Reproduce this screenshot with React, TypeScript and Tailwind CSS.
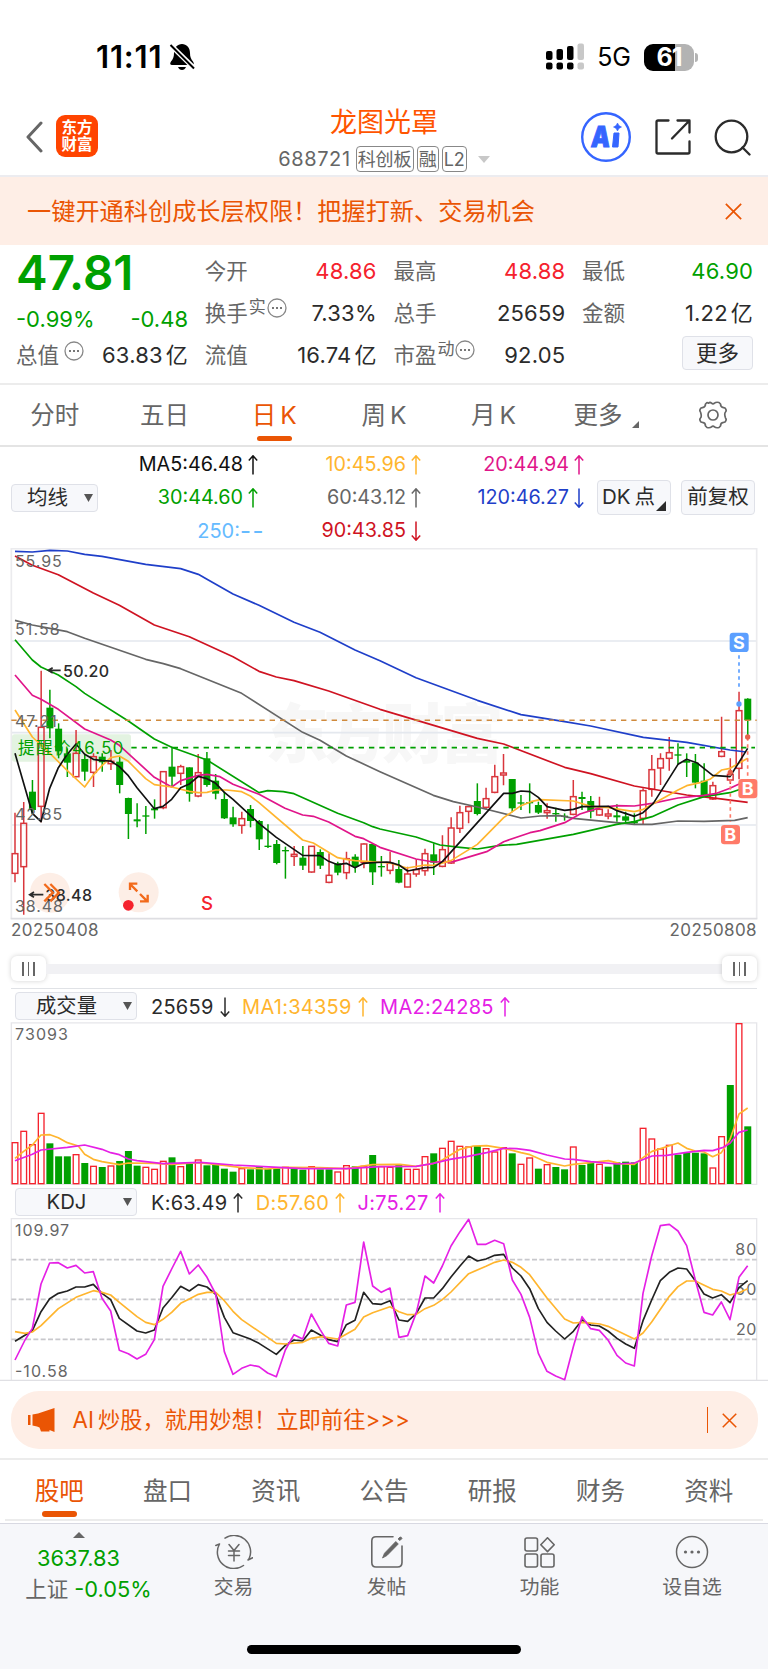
import type { ReactNode } from 'react'

type Candle = [string, number, number, number, number]
type Bar = [string, number]

// chart units are a third of a pixel, candles are spaced by STEP
const FIRST = 45
const STEP = 26.17
const RED = '#d9363c'
const GREEN = '#00a000'

const xAt = (i: number) => FIRST + i * STEP

// [colour, high, top, bottom, low]
const CANDLES: Candle[] = [
  ['r', 818, 941, 1000, 1027], ['r', 786, 850, 980, 1124], ['g', 720, 755, 810, 822],
  ['r', 392, 562, 799, 847], ['g', 449, 503, 565, 595], ['g', 550, 566, 634, 655],
  ['g', 625, 640, 668, 711], ['r', 570, 640, 710, 712], ['g', 645, 657, 695, 722],
  ['r', 640, 650, 697, 741], ['g', 640, 650, 667, 695], ['r', 630, 664, 671, 690],
  ['g', 650, 665, 735, 760], ['g', 773, 774, 822, 897], ['g', 790, 838, 844, 862],
  ['g', 798, 826, 830, 882], ['g', 778, 805, 811, 836], ['r', 693, 695, 803, 808],
  ['g', 620, 680, 710, 740], ['r', 674, 680, 700, 735], ['g', 682, 682, 761, 785],
  ['r', 642, 698, 768, 772], ['g', 636, 655, 735, 740], ['g', 702, 722, 761, 778],
  ['g', 755, 777, 835, 837], ['g', 800, 832, 853, 860], ['r', 815, 836, 856, 881],
  ['g', 795, 807, 843, 862], ['g', 840, 843, 898, 930], ['g', 853, 917, 921, 924],
  ['g', 900, 912, 969, 973], ['g', 920, 930, 934, 1016], ['r', 918, 943, 949, 978],
  ['g', 918, 953, 977, 990], ['r', 918, 919, 996, 998], ['g', 928, 936, 977, 987],
  ['r', 940, 1006, 1027, 1030], ['g', 965, 970, 998, 1006], ['r', 935, 956, 998, 1018],
  ['g', 943, 950, 980, 998], ['r', 910, 912, 967, 985], ['g', 911, 912, 997, 1035],
  ['g', 948, 978, 982, 1010], ['r', 935, 970, 991, 1003], ['g', 960, 987, 1028, 1030],
  ['r', 980, 1002, 1041, 1042], ['r', 958, 989, 1002, 1010], ['r', 926, 941, 992, 1007],
  ['g', 910, 943, 968, 1005], ['r', 886, 929, 979, 982], ['r', 832, 864, 969, 972],
  ['r', 797, 818, 865, 879], ['r', 797, 800, 814, 850], ['g', 730, 783, 822, 826],
  ['r', 743, 776, 802, 808], ['r', 674, 710, 757, 760], ['r', 642, 699, 705, 736],
  ['g', 717, 717, 805, 817], ['g', 765, 787, 791, 810], ['g', 730, 786, 790, 820],
  ['g', 785, 795, 818, 822], ['r', 790, 812, 818, 836], ['g', 803, 819, 823, 845],
  ['g', 820, 827, 831, 842], ['r', 720, 770, 823, 826], ['g', 755, 771, 777, 810],
  ['g', 768, 783, 815, 835], ['r', 770, 808, 825, 827], ['r', 808, 822, 828, 838],
  ['g', 793, 826, 832, 845], ['g', 815, 829, 842, 848], ['g', 820, 844, 850, 853],
  ['r', 745, 752, 835, 852], ['r', 645, 689, 748, 770], ['r', 640, 656, 684, 735],
  ['r', 591, 638, 655, 692], ['g', 610, 643, 647, 675], ['g', 640, 662, 668, 711],
  ['g', 642, 668, 728, 745], ['g', 670, 722, 768, 770], ['r', 725, 737, 777, 780],
  ['r', 530, 635, 649, 652], ['r', 655, 703, 720, 732], ['r', 455, 512, 685, 718],
  ['g', 475, 476, 541, 597],
]

const MA_LINES = [
  { color: '#1f3fc9', points: '45,34 97,36 150,31 202,33 254,43 306,49 437,73 542,86 595,103 621,118 699,162 777,196 882,247 960,277 1065,330 1140,362 1248,413 1432,481 1563,524 1694,545 1772,558 1930,592 2060,607 2190,630 2238,636' },
  { color: '#cf1322', points: '45,48 97,76 175,104 280,159 358,196 463,255 568,290 699,350 777,394 829,411 882,422 986,453 1140,508 1432,595 1511,612 1694,682 1772,701 1903,738 2060,765 2150,775 2243,787' },
  { color: '#666666', points: '45,241 97,255 150,265 202,275 254,295 437,358 490,371 542,386 725,460 908,577 960,601 1039,648 1140,695 1300,766 1360,785 1432,801 1563,834 1620,828 1680,827 1720,835 1903,853 1956,853 2034,843 2112,844 2204,841 2243,833' },
  { color: '#00a000', points: '45,299 97,360 123,381 175,405 228,440 254,460 385,543 463,597 515,622 621,660 777,758 803,752 850,755 882,761 1013,820 1091,848 1118,860 1140,867 1248,891 1320,915 1380,922 1432,927 1500,916 1550,913 1720,883 1850,853 1903,845 1956,830 2034,795 2112,770 2190,758 2243,740' },
  { color: '#e0158a', points: '45,405 97,466 123,478 175,508 254,567 332,600 358,616 463,712 515,741 542,722 595,706 621,703 660,710 699,733 777,763 855,805 908,825 940,829 986,846 1065,889 1091,896 1140,922 1248,957 1300,966 1360,965 1460,935 1511,905 1590,878 1620,872 1694,848 1740,822 1800,803 1850,797 1903,798 1956,790 2034,774 2112,766 2150,760 2190,745 2243,720' },
  { color: '#ffb52e', points: '45,510 97,591 150,640 202,692 254,741 280,705 306,677 332,653 358,648 385,664 411,690 437,716 463,734 515,741 568,754 595,758 621,757 647,750 680,750 725,755 751,768 777,788 908,900 940,909 1013,953 1039,958 1065,962 1110,965 1170,969 1221,984 1275,975 1301,976 1353,962 1432,913 1511,833 1563,797 1593,785 1620,779 1720,783 1772,799 1825,803 1903,815 1930,808 2034,750 2060,737 2100,728 2130,718 2165,690 2190,685 2243,655' },
  { color: '#111111', points: '45,640 97,820 123,845 149,745 175,683 202,643 228,612 254,643 280,658 306,662 332,663 358,680 385,707 411,743 463,806 489,799 515,778 542,743 568,732 595,709 621,716 647,730 673,757 699,778 777,850 829,892 908,946 960,947 986,964 1013,974 1039,970 1065,983 1091,970 1118,968 1160,966 1170,967 1197,975 1223,993 1275,983 1301,982 1327,965 1511,760 1537,760 1563,753 1590,755 1615,772 1641,800 1694,811 1720,808 1746,800 1825,799 1851,812 1903,829 1929,818 1960,790 2034,673 2060,658 2090,668 2138,706 2190,710 2243,625' },
]

const VOLUMES: Bar[] = [
  ['r', 637], ['r', 603], ['r', 643], ['r', 549], ['g', 640], ['g', 679], ['g', 679], ['r', 673],
  ['g', 699], ['r', 708], ['g', 711], ['r', 707], ['g', 693], ['g', 663], ['g', 707], ['r', 711],
  ['r', 717], ['r', 693], ['g', 682], ['r', 709], ['g', 702], ['r', 689], ['g', 706], ['g', 704],
  ['g', 716], ['g', 725], ['r', 715], ['g', 718], ['g', 709], ['g', 716], ['g', 715], ['r', 711],
  ['g', 711], ['g', 719], ['r', 709], ['g', 718], ['g', 718], ['r', 725], ['r', 706], ['g', 709],
  ['r', 708], ['g', 675], ['r', 709], ['r', 711], ['g', 704], ['r', 717], ['r', 717], ['r', 679],
  ['g', 670], ['r', 654], ['r', 633], ['r', 648], ['r', 650], ['g', 648], ['r', 655], ['r', 665],
  ['r', 652], ['g', 670], ['r', 702], ['r', 683], ['g', 716], ['r', 703], ['g', 711], ['g', 718],
  ['r', 650], ['g', 705], ['g', 698], ['r', 702], ['g', 710], ['g', 697], ['g', 695], ['g', 697],
  ['r', 594], ['r', 626], ['r', 656], ['r', 645], ['g', 674], ['g', 667], ['g', 668], ['g', 670],
  ['r', 713], ['r', 619], ['g', 465], ['r', 280], ['g', 589],
]

const VOLUME_LINES = [
  { color: '#ffb52e', points: '45,685 71,664 97,645 123,615 150,614 175,623 202,638 235,648 254,673 280,688 306,695 358,704 385,699 463,700 515,703 595,698 673,706 725,713 800,717 856,712 960,713 1039,716 1118,704 1200,703 1248,709 1301,700 1327,690 1380,658 1420,648 1460,647 1511,655 1540,662 1563,668 1590,674 1641,697 1694,708 1720,703 1772,698 1825,692 1860,701 1903,703 1930,682 1956,664 2034,639 2060,655 2086,663 2112,666 2138,680 2164,668 2190,628 2217,552 2243,534' },
  { color: '#e520e5', points: '45,692 97,673 123,660 202,652 254,645 306,658 332,668 358,674 385,687 411,692 489,701 600,697 700,705 777,709 908,716 1039,716 1140,710 1248,709 1300,700 1350,688 1400,680 1460,668 1511,655 1550,656 1590,661 1641,675 1694,687 1720,688 1772,695 1851,702 1903,699 1956,678 2000,676 2060,667 2112,661 2138,662 2170,652 2190,640 2217,607 2243,600' },
]

const KDJ_LINES = [
  { color: '#222222', points: '45,1234 97,1202 123,1145 149,1106 175,1090 202,1083 228,1071 254,1071 280,1063 306,1090 332,1109 358,1165 411,1203 437,1209 463,1200 489,1134 515,1103 542,1069 568,1083 595,1064 621,1071 647,1093 673,1162 699,1208 751,1227 777,1240 829,1273 856,1246 882,1230 908,1233 934,1200 986,1229 1013,1235 1039,1184 1065,1171 1091,1087 1118,1121 1144,1123 1170,1112 1197,1170 1223,1174 1249,1150 1275,1104 1301,1104 1327,1076 1353,1041 1380,1008 1406,978 1432,993 1458,987 1484,976 1511,973 1537,1014 1563,1038 1589,1076 1615,1136 1641,1177 1667,1203 1694,1227 1720,1204 1746,1170 1772,1185 1798,1188 1824,1203 1851,1225 1877,1242 1903,1255 1929,1172 1955,1110 1981,1052 2008,1027 2034,1014 2060,1017 2086,1052 2112,1092 2138,1104 2164,1094 2190,1118 2217,1073 2243,1052' },
  { color: '#ffb52e', points: '45,1205 75,1210 97,1206 123,1187 175,1136 228,1102 280,1082 306,1087 332,1095 358,1117 411,1160 437,1177 463,1184 489,1168 515,1147 542,1120 568,1107 595,1093 621,1087 647,1087 673,1112 699,1144 725,1169 803,1222 829,1240 856,1242 908,1237 934,1225 965,1220 1013,1227 1065,1198 1091,1161 1118,1148 1170,1130 1197,1145 1223,1154 1249,1153 1275,1136 1301,1126 1327,1109 1353,1086 1406,1031 1458,1009 1484,997 1511,990 1537,997 1563,1012 1589,1034 1641,1104 1694,1167 1720,1179 1750,1177 1800,1182 1824,1189 1903,1227 1929,1209 1955,1176 2008,1099 2034,1070 2060,1053 2086,1053 2138,1078 2164,1083 2190,1095 2217,1088 2243,1076' },
  { color: '#e520e5', points: '45,1290 75,1230 97,1195 123,1062 149,999 175,998 202,1014 228,1006 254,1029 280,1025 306,1105 332,1143 358,1261 385,1271 411,1287 437,1273 463,1229 489,1069 515,1017 542,964 568,1032 595,1005 621,1042 647,1092 673,1265 699,1333 725,1315 751,1305 777,1310 803,1329 829,1340 856,1260 882,1214 908,1227 934,1152 960,1198 986,1240 1013,1248 1039,1125 1065,1117 1091,936 1118,1068 1144,1087 1170,1074 1197,1222 1223,1217 1249,1148 1275,1038 1301,1059 1327,1008 1353,948 1380,905 1406,868 1432,943 1458,943 1484,931 1511,941 1537,1050 1563,1093 1589,1162 1615,1270 1641,1324 1667,1338 1694,1349 1720,1250 1746,1160 1772,1196 1798,1201 1824,1230 1851,1276 1877,1299 1903,1308 1929,1090 1955,978 1981,887 2008,883 2034,903 2060,947 2086,1050 2112,1147 2138,1155 2164,1116 2190,1169 2217,1042 2243,1007' },
]

interface LineProps {
  color: string
  points: string
}

function Line({ color, points }: LineProps) {
  return <polyline points={points} fill="none" stroke={color} strokeWidth={5} strokeLinejoin="round" />
}

interface LabelProps {
  x: number
  y: number
  width: number
  size?: number
  color?: string
  weight?: number
  children: string
}

function Label({ x, y, width, size = 48, color = '#666', weight = 400, children }: LabelProps) {
  return (
    <text x={x} y={y} fontSize={size} fill={color} fontWeight={weight} textLength={width}>
      {children}
    </text>
  )
}

function StatusBar() {
  return (
    <div className="flex h-[90px] items-start justify-between pt-[40px] pr-[70px] pl-[96px]">
      <div className="flex h-[34px] items-center gap-[7px]">
        <span className="text-[31px] leading-[34px] font-semibold tracking-[0.8px] text-black">11:11</span>
        <svg width="26" height="28" viewBox="0 0 26 28">
          <path d="M13 1C8.500 1 5 4.500 5 10c0 4-1 6-3 8.500-1.500 2-.8 3.500 1 3.500h20c1.800 0 2.500-1.500 1-3.500C22 16 21 14 21 10c0-5.500-3.500-9-8-9zM9 24h8c-.8 2-2.200 3-4 3s-3.200-1-4-3z" fill="#000" />
          <path d="M2 2.500 25 25" stroke="#fff" strokeWidth="5" />
          <path d="M1.500 2 25 25.500" stroke="#000" strokeWidth="2" />
        </svg>
      </div>
      <div className="flex h-[34px] items-center">
        <svg width="39" height="28" viewBox="0 0 39 28">
          <g fill="#000">
            <rect x="0" y="8" width="6.500" height="9" rx="2" />
            <rect x="10.500" y="6" width="6.500" height="11" rx="2" />
            <rect x="21" y="3" width="6.500" height="14" rx="2" />
            <rect x="0" y="19.500" width="6.500" height="7" rx="2" />
            <rect x="10.500" y="19.500" width="6.500" height="7" rx="2" />
            <rect x="21" y="19.500" width="6.500" height="7" rx="2" />
          </g>
          <g fill="#c8c8c8">
            <rect x="31.500" y="0.500" width="6.500" height="16.500" rx="2" />
            <rect x="31.500" y="19.500" width="6.500" height="7" rx="2" />
          </g>
        </svg>
        <span className="ml-[12px] text-[25px] leading-[34px] text-black">5G</span>
        <div className="ml-[13px] flex h-[27px] w-[50px] items-center justify-center rounded-[9px] bg-linear-to-r from-black from-62% to-[#b3b3b3] to-62% text-[25px] leading-[27px] font-bold tracking-[-1px] text-white">
          61
        </div>
        <div className="ml-[1px] h-[9px] w-[3px] rounded-r-full bg-[#b3b3b3]" />
      </div>
    </div>
  )
}

function Badge({ children }: { children: ReactNode }) {
  return (
    <span className="flex h-[26px] items-center rounded-[4px] border-[1.5px] border-[#888] px-[1px] text-[18px] text-[#666]">
      {children}
    </span>
  )
}

function Header() {
  return (
    <header className="grid h-[87px] grid-cols-[1fr_auto_1fr] border-b-2 border-[#ececf0]">
      <div className="flex items-start gap-[13px] pt-[25px] pl-[25px]">
        <svg width="18" height="32" viewBox="0 0 18 32" className="mt-[6px]">
          <path d="M16 2 3 16l13 14" fill="none" stroke="#666" strokeWidth="3" strokeLinecap="round" strokeLinejoin="round" />
        </svg>
        <div className="flex h-[42px] w-[42px] flex-col items-center justify-center rounded-[9px] bg-[#ff4400] text-[15.500px] leading-[17px] font-bold text-white">
          <span>东方</span>
          <span>财富</span>
        </div>
      </div>
      <div className="flex flex-col items-center">
        <h1 className="mt-[14px] h-[38px] text-[27px] leading-[38px] text-[#ff5500]">龙图光罩</h1>
        <div className="mt-[4px] flex h-[26px] items-center gap-[3px] text-[#666]">
          <span className="mr-[2px] text-[20px] tracking-[0.600px]">688721</span>
          <Badge>科创板</Badge>
          <Badge>融</Badge>
          <Badge>L2</Badge>
          <svg width="12" height="7" viewBox="0 0 12 7" className="ml-[8px]">
            <path d="M0 0h12L6 7z" fill="#c8c8c8" />
          </svg>
        </div>
      </div>
      <div className="flex items-start justify-end pt-[22px] pr-[17px]">
        <svg width="50" height="50" viewBox="0 0 50 50">
          <circle cx="25" cy="25" r="23.800" fill="none" stroke="#3565ff" strokeWidth="2.400" />
          <text x="10" y="35" fontSize="29" fontWeight="900" fill="#3565ff" stroke="#3565ff" strokeWidth="1" textLength="19" lengthAdjust="spacingAndGlyphs" transform="skewX(-4) translate(2 0)">A</text>
          <path d="M33 21h5l-1 14h-5.500z" fill="#3565ff" stroke="#3565ff" strokeLinejoin="round" />
          <path d="M36.500 11l1.400 2.600 2.600 1.400-2.600 1.400-1.400 2.600-1.400-2.600-2.600-1.400 2.600-1.400z" fill="#3565ff" stroke="#3565ff" strokeWidth=".6" />
        </svg>
        <svg width="36" height="36" viewBox="0 0 36 36" className="mt-[7px] ml-[24px]" fill="none" stroke="#2b2b2b" strokeWidth="2.300" strokeLinecap="round" strokeLinejoin="round">
          <path d="M13.500 1.500H3Q1.500 1.500 1.500 3v30Q1.500 34.500 3 34.500h30q1.500 0 1.500-1.500V22.500" />
          <path d="M22.500 1.500h12v12M34 2 17 19.500" />
        </svg>
        <svg width="37" height="37" viewBox="0 0 37 37" className="mt-[7px] ml-[23px]" fill="none" stroke="#2b2b2b" strokeWidth="2.300" strokeLinecap="round">
          <circle cx="17.500" cy="17.500" r="15.800" />
          <path d="m28.500 28.500 7 7" />
        </svg>
      </div>
    </header>
  )
}

function Close({ size }: { size: number }) {
  return (
    <svg width={size} height={size} viewBox="0 0 16 16">
      <path d="M.8.8l14.400 14.400M15.200.8.800 15.200" stroke="#ea5504" strokeWidth="1.600" />
    </svg>
  )
}

function Notice() {
  return (
    <div className="flex h-[68px] items-center justify-between bg-[#feeee6] pr-[26px] pl-[27px] text-[24.200px] text-[#ea5504]">
      <span className="pt-[3px]">一键开通科创成长层权限！把握打新、交易机会</span>
      <Close size={17} />
    </div>
  )
}

function Dots() {
  return (
    <svg width="20" height="20" viewBox="0 0 20 20" className="ml-[1px]">
      <circle cx="10" cy="10" r="9" fill="none" stroke="#888" strokeWidth="1.300" />
      <path d="M5 10h2m2 0h2m2 0h2" stroke="#777" strokeWidth="1.800" />
    </svg>
  )
}

interface StatProps {
  label: string
  sup?: string
  dots?: boolean
  value: string
  unit?: string
  color?: string
}

function Stat({ label, sup, dots, value, unit, color = 'text-[#2b2b2b]' }: StatProps) {
  return (
    <div className="flex h-[42px] items-center justify-between">
      <div className="flex h-[32px] items-center text-[21.500px] text-[#666]">
        {label}
        {sup && <span className="ml-[1px] self-start text-[17px] leading-[20px]">{sup}</span>}
        {dots && <span className={sup ? 'self-start pt-[1px]' : 'self-start pt-[2px] pl-[4px]'}><Dots /></span>}
      </div>
      <span className={`text-[22px] tracking-[0.200px] whitespace-nowrap ${color}`}>
        {value}
        {unit && <span className="ml-[3px]">{unit}</span>}
      </span>
    </div>
  )
}

function Quote() {
  return (
    <section className="grid h-[140px] grid-cols-[172px_172px_172px_171px] justify-start gap-x-[16.700px] border-b-2 border-[#ececec] pt-[5px] pl-[16px]">
      <div className="text-[#00a000]">
        <div className="h-[47px] text-[47.500px] leading-[46px] font-semibold">47.81</div>
        <div className="flex h-[37px] items-center justify-between pt-[7px] text-[22px]">
          <span>-0.99%</span>
          <span>-0.48</span>
        </div>
        <Stat label="总值" dots value="63.83" unit="亿" />
      </div>
      <div>
        <Stat label="今开" value="48.86" color="text-[#f5222d]" />
        <Stat label="换手" sup="实" dots value="7.33%" />
        <Stat label="流值" value="16.74" unit="亿" />
      </div>
      <div>
        <Stat label="最高" value="48.88" color="text-[#f5222d]" />
        <Stat label="总手" value="25659" />
        <Stat label="市盈" sup="动" dots value="92.05" />
      </div>
      <div>
        <Stat label="最低" value="46.90" color="text-[#00a000]" />
        <Stat label="金额" value="1.22" unit="亿" />
        <button className="mt-[2px] ml-auto flex h-[34px] w-[71px] items-center justify-center rounded-[4px] border border-[#dfe1e8] bg-[#f7f8fb] text-[21.500px] text-[#2b2b2b]">
          更多
        </button>
      </div>
    </section>
  )
}

const PERIODS = ['分时', '五日', '日K', '周K', '月K']

function PeriodTabs() {
  return (
    <nav className="flex h-[62px] border-b-2 border-[#e4e4e4] text-[24.500px] text-[#666]">
      {PERIODS.map((name) => (
        <div key={name} className={`flex w-[109.700px] flex-col items-center ${name === '日K' ? 'text-[#ea5504]' : ''}`}>
          <span className="mt-[12px] h-[36px] leading-[36px]">
            {name.endsWith('K') ? (
              <>
                {name[0]}
                <span className="ml-[4px]">K</span>
              </>
            ) : (
              name
            )}
          </span>
          {name === '日K' && <span className="mt-[3px] h-[5px] w-[35px] rounded-full bg-[#ea5504]" />}
        </div>
      ))}
      <div className="ml-[25px] flex items-start">
        <span className="mt-[12px] leading-[36px]">更多</span>
        <svg width="7" height="7" viewBox="0 0 7 7" className="mt-[36px] ml-[10px]">
          <path d="M7 0v7H0z" fill="#666" />
        </svg>
      </div>
      <svg width="30" height="30" viewBox="0 0 30 30" className="mt-[15px] ml-[59px]" fill="none" stroke="#666" strokeWidth="1.700" strokeLinejoin="round">
        <circle cx="15" cy="15" r="5" />
        <path d="M10.500 3.200Q12 1.800 13.500 3.200T16.500 3.200Q18 1.800 21 2.500L22.500 4Q22.500 7.200 25.500 7.600L27 8Q29 10.500 27.500 12T27.500 18Q29 19.500 27 22L25.500 22.400Q22.500 22.800 22.500 26L21 27.500Q18 28.200 16.500 26.800T13.500 26.800Q12 28.200 9 27.500L7.500 26Q7.500 22.800 4.500 22.400L3 22Q1 19.500 2.500 18T2.500 12Q1 10.500 3 8L4.500 7.600Q7.500 7.200 7.500 4L9 2.500Z" />
      </svg>
    </nav>
  )
}

function Arrow({ down }: { down?: boolean }) {
  return (
    <svg width="10" height="20" viewBox="0 0 10 20" className={down ? 'rotate-180' : ''} fill="none" stroke="currentColor" strokeWidth="1.500">
      <path d="M5 19.500V1M.8 5.500 5 .800 9.200 5.500" />
    </svg>
  )
}

interface IndicatorProps {
  color: string
  down?: boolean
  children: string
}

function Indicator({ color, down, children }: IndicatorProps) {
  return (
    <span className={`flex h-[33px] items-center justify-end gap-[5px] pt-[2px] text-[19.800px] ${color}`}>
      {children}
      <Arrow down={down} />
    </span>
  )
}

function Caret() {
  return (
    <svg width="9" height="8" viewBox="0 0 9 8">
      <path d="M0 0h9L4.500 8z" fill="#555" />
    </svg>
  )
}

function MovingAverages() {
  return (
    <section className="flex h-[101px] items-start">
      <button className="mt-[37px] ml-[11px] flex h-[28px] w-[87px] items-center justify-between rounded-[4px] border border-[#dfe1e8] bg-[#f7f8fb] pr-[4px] pl-[15px] text-[20.500px] text-[#2b2b2b]">
        均线
        <Caret />
      </button>
      <div className="grid w-[486px] grid-cols-[160px_163px_163px]">
        <Indicator color="text-[#111]">MA5:46.48</Indicator>
        <Indicator color="text-[#ffb52e]">10:45.96</Indicator>
        <Indicator color="text-[#e0158a]">20:44.94</Indicator>
        <Indicator color="text-[#00a000]">30:44.60</Indicator>
        <Indicator color="text-[#666]">60:43.12</Indicator>
        <Indicator color="text-[#1f3fc9]" down>120:46.27</Indicator>
        <span className="-mr-[7px] flex h-[33px] items-center justify-end pt-[2px] text-[20px] text-[#66bbff]">
          250:<span className="text-[24px] leading-[24px] tracking-[1.500px]">--</span>
        </span>
        <Indicator color="text-[#cf1322]" down>90:43.85</Indicator>
      </div>
      <div className="mt-[33px] ml-[13px] flex gap-[10px] text-[20.500px] text-[#2b2b2b]">
        <button className="relative flex h-[35px] w-[74px] items-center rounded-[4px] border border-[#dfe1e8] bg-[#f7f8fb] pl-[4px]">
          DK<span className="ml-[4px]">点</span>
          <svg width="10" height="10" viewBox="0 0 10 10" className="absolute right-[4px] bottom-[3px]">
            <path d="M10 0v10H0z" fill="#2b2b2b" />
          </svg>
        </button>
        <button className="flex h-[35px] w-[74px] items-center justify-center rounded-[4px] border border-[#dfe1e8] bg-[#f7f8fb]">前复权</button>
      </div>
    </section>
  )
}

interface MarkProps {
  x: number
  y: number
  color: string
  children: string
}

function Mark({ x, y, color, children }: MarkProps) {
  return (
    <g>
      <rect x={x - 28} y={y - 29} width="57" height="58" rx="10" fill={color} />
      <text x={x} y={y + 19} fontSize="54" fontWeight="700" fill="#fff" textAnchor="middle">
        {children}
      </text>
    </g>
  )
}

function CandleShape({ candle, index }: { candle: Candle; index: number }) {
  const [kind, high, top, bottom, low] = candle
  const x = xAt(index)
  if (kind === 'g') {
    return (
      <g>
        <path d={`M${x} ${high}V${low}`} stroke={GREEN} strokeWidth="4.500" />
        <rect x={x - 10.500} y={top} width="21" height={Math.max(bottom - top, 4)} fill={GREEN} />
      </g>
    )
  }
  return (
    <g fill="none" stroke={RED} strokeWidth="4.500">
      <path d={`M${x} ${high}V${top}M${x} ${bottom}V${low}`} />
      <rect x={x - 8.500} y={top} width="17" height={bottom - top} />
    </g>
  )
}

function KLineChart() {
  return (
    <svg width="768" height="372" viewBox="0 24 2304 1116" className="block">
      <text x="796" y="652" fontSize="190" fontWeight="900" fill="#f7f7f7" textLength="715">东方财富</text>
      <path d="M34 303H2270M34 578H2270M34 855H2270" stroke="#e4e8ee" strokeWidth="5" />
      <path d="M34 1136V26H2270V1136" fill="none" stroke="#ebebee" strokeWidth="5" />
      <path d="M32 1136H2272" stroke="#dedee2" strokeWidth="5" />
      <rect x="36" y="583" width="357" height="82" rx="8" fill="#e3f3e1" />
      <circle cx="150" cy="1058" r="60" fill="#fdeee6" />
      <circle cx="416" cy="1057" r="60" fill="#fdeee6" />
      {CANDLES.map((candle, i) => (
        <CandleShape key={i} candle={candle} index={i} />
      ))}
      {MA_LINES.map((line) => (
        <Line key={line.color} {...line} />
      ))}
      <path d="M34 541H2270" stroke="#d08a3c" strokeWidth="4.500" strokeDasharray="16 15" />
      <path d="M394 623H2265" stroke="#00a000" strokeWidth="5.500" strokeDasharray="16 15" />
      <Label x={45} y={81} width={140}>55.95</Label>
      <Label x={45} y={285} width={134}>51.58</Label>
      <Label x={45} y={561} width={125}>47.21</Label>
      <Label x={45} y={839} width={142}>42.85</Label>
      <Label x={45} y={1117} width={144}>38.48</Label>
      <Label x={54} y={642} width={316} size={50} color="#00a000">提醒价46.50</Label>
      <path d="M182 391H146M158 383l-13 8 13 8M130 1064H90M102 1056l-13 8 13 8" fill="none" stroke="#2b2b2b" strokeWidth="5" />
      <Label x={189} y={410} width={138} color="#2b2b2b" weight={500}>50.20</Label>
      <Label x={136} y={1084} width={140} color="#2b2b2b" weight={500}>38.48</Label>
      <path d="M133 1032l26 26-26 26M151 1032l26 26-26 26" fill="none" stroke="#f26a1b" strokeWidth="7" />
      <path d="M412 1054l-22-22M390 1050v-19h22M420 1062l22 22M443 1064v20h-23" fill="none" stroke="#f26a1b" strokeWidth="7" />
      <circle cx="385" cy="1096" r="16" fill="#f5222d" />
      <text x="603" y="1109" fontSize="56" fontWeight="500" fill="#f5222d">S</text>
      <path d="M2217 346V446" stroke="#5b9fff" strokeWidth="5" strokeDasharray="10 11" />
      <circle cx="2217" cy="492" r="8" fill="#5b9fff" />
      <path d="M2243 592V712M2191 697V846" stroke="#ff7a68" strokeWidth="5" strokeDasharray="10 11" />
      <circle cx="2243" cy="591" r="8" fill="#e8604c" />
      <circle cx="2191" cy="697" r="8" fill="#e8604c" />
      <Mark x={2217} y={307} color="#5b9fff">S</Mark>
      <Mark x={2243} y={746} color="#ff7a68">B</Mark>
      <Mark x={2191} y={884} color="#ff7a68">B</Mark>
    </svg>
  )
}

function Thumb() {
  return (
    <div className="flex h-[25px] w-[35px] items-center justify-center gap-[4px] rounded-[6px] bg-white shadow-[0_0_5px_rgba(0,0,0,0.18)]">
      <span className="h-[14px] w-[1.500px] bg-[#666]" />
      <span className="h-[14px] w-[1.500px] bg-[#666]" />
      <span className="h-[14px] w-[1.500px] bg-[#666]" />
    </div>
  )
}

function RangeSlider() {
  return (
    <div className="mx-[11px] border-b border-[#e0e2e6]">
      <div className="flex h-[20px] justify-between text-[17px] leading-[20px] tracking-[0.400px] text-[#666]">
        <span>20250408</span>
        <span>20250808</span>
      </div>
      <div className="mt-[15px] flex h-[33px] items-center pb-[6px]">
        <Thumb />
        <div className="h-[10px] flex-1 bg-[#f1f1f4]" />
        <Thumb />
      </div>
    </div>
  )
}

function SubHeader({ name, children }: { name: string; children: ReactNode }) {
  return (
    <div className="flex h-[33px] items-center pl-[15px]">
      <button className="mr-[14px] flex h-[28px] w-[122px] items-center justify-between rounded-[4px] border border-[#dfe1e8] bg-[#f7f8fb] pr-[4px] text-[20.300px] text-[#2b2b2b]">
        <span className="flex-1 pt-[2px] pr-[6px] text-center">{name}</span>
        <Caret />
      </button>
      <div className="flex gap-[12.500px] pt-[2px] text-[20px] tracking-[0.250px]">{children}</div>
    </div>
  )
}

interface SeriesProps {
  color: string
  down?: boolean
  children: string
}

function Series({ color, down, children }: SeriesProps) {
  return (
    <span className={`flex items-center gap-[6px] ${color}`}>
      {children}
      <Arrow down={down} />
    </span>
  )
}

function VolumeChart() {
  return (
    <svg width="768" height="163" viewBox="0 276 2304 489" className="block">
      <path d="M34 278.500H2270V763H34z" fill="none" stroke="#e6e6ea" strokeWidth="4" />
      <Label x={45} y={329} width={159}>73093</Label>
      {VOLUMES.map(([kind, top], i) =>
        kind === 'g' ? (
          <rect key={i} x={xAt(i) - 10.500} y={top} width="21" height={762 - top} fill={GREEN} />
        ) : (
          <rect key={i} x={xAt(i) - 8.500} y={top + 1} width="17" height={760 - top} fill="none" stroke="#f5222d" strokeWidth="4" />
        ),
      )}
      {VOLUME_LINES.map((line) => (
        <Line key={line.color} {...line} />
      ))}
    </svg>
  )
}

function KdjChart() {
  return (
    <svg width="768" height="163" viewBox="0 864 2304 489" className="block">
      <path d="M34 1351V866H2270V1351" fill="none" stroke="#e6e6ea" strokeWidth="4" />
      <path d="M0 1351H2304" stroke="#e0e0e4" strokeWidth="4" />
      <path d="M34 989H2270M34 1108H2270M34 1228H2270" stroke="#c8c8cc" strokeWidth="5" strokeDasharray="15 7" />
      <Label x={45} y={918} width={162}>109.97</Label>
      <Label x={45} y={1341} width={158}>-10.58</Label>
      <Label x={2206} y={976} width={63}>80</Label>
      <Label x={2206} y={1095} width={63}>50</Label>
      <Label x={2208} y={1216} width={61}>20</Label>
      {KDJ_LINES.map((line) => (
        <Line key={line.color} {...line} />
      ))}
    </svg>
  )
}

function PromoBanner() {
  return (
    <div className="h-[79px] border-b-2 border-[#ececec] px-[10.500px] pt-[10px]">
      <div className="flex h-[58px] items-center rounded-[28px] bg-[#feeee6] pr-[21px] pl-[17px] text-[22.300px] text-[#ea5504]">
        <svg width="27" height="24" viewBox="0 0 27 24" fill="#ea5504">
          <path d="M0 7h2.500v10H0zM4.500 6.500 10 5.500 26.500 0v24l-5-2v1.500H13l-1.500-4L9 18.500 4.500 17.500z" />
        </svg>
        <span className="ml-[18px]">
          AI<span className="ml-[4px]">炒股，就用妙想！立即前往&gt;&gt;&gt;</span>
        </span>
        <span className="mr-[14px] ml-auto h-[26px] w-px bg-[#ea5504]" />
        <Close size={15} />
      </div>
    </div>
  )
}

const SECTIONS = ['股吧', '盘口', '资讯', '公告', '研报', '财务', '资料']

function SectionTabs() {
  return (
    <div className="h-[64px] border-b border-[#d8d9e2]">
      <nav className="mx-[5px] flex h-[61px] border-b-2 border-[#ececec] text-[24.500px] text-[#666]">
        {SECTIONS.map((name, i) => (
          <div key={name} className={`flex flex-1 flex-col items-center ${i === 0 ? 'text-[#ea5504]' : ''}`}>
            <span className="mt-[13px] h-[36px] leading-[36px]">{name}</span>
            {i === 0 && <span className="mt-[2px] h-[5.500px] w-[35px] rounded-full bg-[#ea5504]" />}
          </div>
        ))}
      </nav>
    </div>
  )
}

function TradeIcon() {
  return (
    <svg width="38" height="34" viewBox="0 0 38 34" fill="none" stroke="#666" strokeWidth="1.500" strokeLinecap="round">
      <path d="M10 3.100A16.500 16.500 0 0 1 34.200 23.500L33 25l4.700-2.300" strokeLinejoin="round" />
      <path d="M28.500 30.500A16.500 16.500 0 0 1 4.500 9L.8 10.500" strokeLinejoin="round" />
      <path d="M14 9.500l5 6 5-6M19 15.500V26M13.500 16h11M13.500 20.500h11" />
    </svg>
  )
}

function PostIcon() {
  return (
    <svg width="34" height="34" viewBox="0 0 34 34" fill="none" stroke="#666" strokeWidth="1.600">
      <path d="M23 1.800H6Q1.800 1.800 1.800 6v21.500Q1.800 32 6 32h21.500Q32 32 32 27.500V11" strokeLinecap="round" />
      <path d="M12.500 23l2-4.800L25.800 6.500l2.500 2.500L17 20.500zM28 4l2-2q1.500-.3 2 1.500l-2 2z" fill="#666" strokeWidth=".8" />
    </svg>
  )
}

function FeatureIcon() {
  return (
    <svg width="31" height="31" viewBox="0 0 31 31" fill="none" stroke="#666" strokeWidth="1.600" strokeLinejoin="round">
      <rect x="1" y="1" width="12.500" height="13" rx="2" />
      <rect x="1" y="17" width="12.500" height="13" rx="2" />
      <rect x="17" y="17" width="13" height="13" rx="2" />
      <path d="M23.500.8 30.200 7.700 23.500 14.600 16.800 7.700z" />
    </svg>
  )
}

function MoreIcon() {
  return (
    <svg width="34" height="34" viewBox="0 0 34 34">
      <circle cx="17" cy="17" r="15.500" fill="none" stroke="#666" strokeWidth="1.500" />
      <g fill="#666">
        <circle cx="10.500" cy="17" r="1.600" />
        <circle cx="17" cy="17" r="1.600" />
        <circle cx="23.500" cy="17" r="1.600" />
      </g>
    </svg>
  )
}

const ACTIONS = [
  { name: '交易', icon: <TradeIcon /> },
  { name: '发帖', icon: <PostIcon /> },
  { name: '功能', icon: <FeatureIcon /> },
  { name: '设自选', icon: <MoreIcon /> },
]

function BottomBar() {
  return (
    <footer className="flex h-[145px] flex-col items-center bg-[#f6f7fa]">
      <div className="grid w-full grid-cols-[157px_153px_153px_153px_152px]">
        <div className="flex flex-col items-center text-[21.800px] text-[#00a000]">
          <svg width="12" height="6" viewBox="0 0 12 6" className="mt-[8px]">
            <path d="M0 6h12L6 0z" fill="#666" />
          </svg>
          <span className="mt-[5px] h-[30px] leading-[30px]">3637.83</span>
          <span className="ml-[20px] flex h-[32px] items-center whitespace-nowrap">
            <span className="mr-[6px] text-[21.500px] text-[#666]">上证</span>-0.05%
          </span>
        </div>
        {ACTIONS.map(({ name, icon }) => (
          <div key={name} className="flex flex-col items-center text-[19.800px] text-[#666]">
            <div className="mt-[11px] flex h-[34px] items-center">{icon}</div>
            <span className="mt-[3px] h-[30px] leading-[30px]">{name}</span>
          </div>
        ))}
      </div>
      <div className="mt-auto mb-[15px] h-[9px] w-[274px] rounded-full bg-black" />
    </footer>
  )
}

export default function App() {
  return (
    <main className="h-[1669px] w-[768px] overflow-hidden bg-white font-['Inter','Noto_Sans_CJK_SC',sans-serif]">
      <StatusBar />
      <Header />
      <Notice />
      <Quote />
      <PeriodTabs />
      <MovingAverages />
      <KLineChart />
      <RangeSlider />
      <SubHeader name="成交量">
        <Series color="text-[#2b2b2b]" down>25659</Series>
        <Series color="text-[#ffb52e]">MA1:34359</Series>
        <Series color="text-[#e520e5]">MA2:24285</Series>
      </SubHeader>
      <VolumeChart />
      <SubHeader name="KDJ">
        <Series color="text-[#2b2b2b]">K:63.49</Series>
        <Series color="text-[#ffb52e]">D:57.60</Series>
        <Series color="text-[#e520e5]">J:75.27</Series>
      </SubHeader>
      <KdjChart />
      <PromoBanner />
      <SectionTabs />
      <BottomBar />
    </main>
  )
}
